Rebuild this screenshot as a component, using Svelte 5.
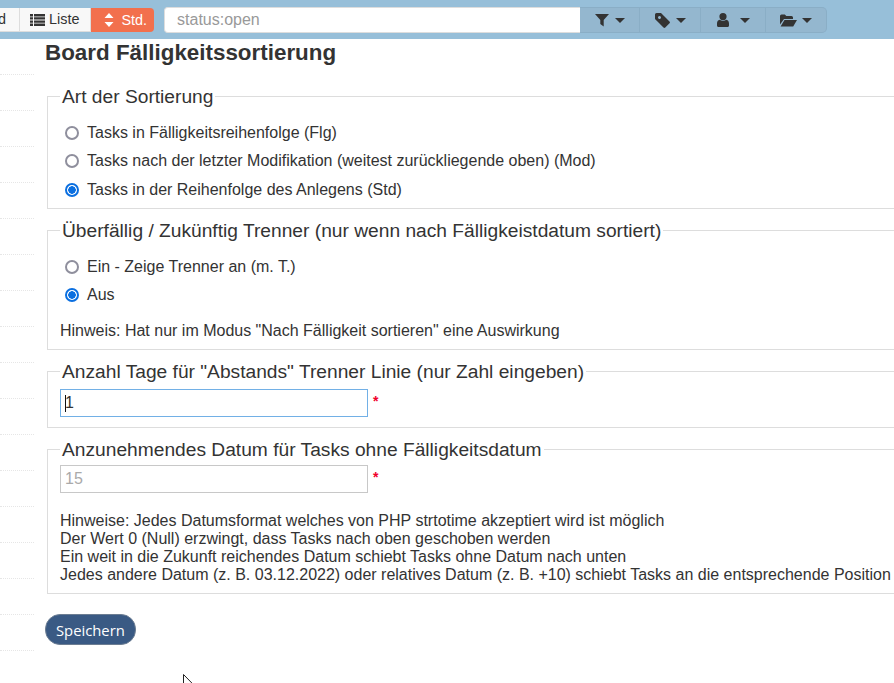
<script>
  const rows = Array.from({ length: 17 });
  const hints = [
    'Hinweise: Jedes Datumsformat welches von PHP strtotime akzeptiert wird ist möglich',
    'Der Wert 0 (Null) erzwingt, dass Tasks nach oben geschoben werden',
    'Ein weit in die Zukunft reichendes Datum schiebt Tasks ohne Datum nach unten',
    'Jedes andere Datum (z. B. 03.12.2022) oder relatives Datum (z. B. +10) schiebt Tasks an die entsprechende Position'
  ];
</script>

<div class="page">
  <header class="topbar">
    <div class="views">
      <span class="btn cut">d</span>
      <span class="btn">
        <svg class="ico" viewBox="0 0 15 12" width="15" height="12"><path d="M0 0h3v2.400H0zM4 0h11v2.400H4zM0 3.200h3v2.400H0zM4 3.200h11v2.400H4zM0 6.400h3v2.400H0zM4 6.400h11v2.400H4zM0 9.600h3V12H0zM4 9.600h11V12H4z" fill="#333"/></svg>
        Liste
      </span>
      <span class="btn active">
        <svg class="ico" viewBox="0 0 10 14" width="10" height="14"><path d="M5 0l4.500 5H.5zM5 14L.5 9h9z" fill="#fff"/></svg>
        Std.
      </span>
    </div>
    <div class="search">status:open</div>
    <div class="filters">
      <span class="drop f1">
        <svg viewBox="0 0 14 14" width="14" height="14"><path d="M0 1h14L8.700 7v6.500L5.300 11V7z" fill="#333"/></svg>
        <i class="caret"></i>
      </span>
      <span class="drop f2">
        <svg viewBox="0 0 15 15" width="15" height="15"><path fill-rule="evenodd" d="M0 1.500A1.500 1.500 0 0 1 1.500 0H6l8.500 8.500a1.300 1.300 0 0 1 0 1.800L10.300 14.500a1.300 1.300 0 0 1-1.800 0L0 6zM3 4.500a1.500 1.500 0 1 0 0-.01z" fill="#333"/></svg>
        <i class="caret"></i>
      </span>
      <span class="drop f3">
        <svg viewBox="0 0 12 14" width="12" height="14"><path d="M6 0a3.400 3.400 0 1 1 0 7.200A3.400 3.400 0 0 1 6 0zM2.600 6.800c1.900 1.500 4.900 1.500 6.800 0 1.700.3 2.600 1.800 2.600 3.800v1.900c0 .9-.6 1.500-1.500 1.500h-9C.6 14 0 13.400 0 12.500v-1.900c0-2 .9-3.500 2.600-3.800z" fill="#333"/></svg>
        <i class="caret"></i>
      </span>
      <span class="drop f4">
        <svg viewBox="0 0 17 13" width="17" height="13"><path d="M0 2a1.500 1.500 0 0 1 1.500-1.500h3.300L6.300 2h5.200A1.500 1.500 0 0 1 13 3.500V5H4L0 10.500zM4.500 6H17l-3.800 6.500H.6z" fill="#333"/></svg>
        <i class="caret"></i>
      </span>
    </div>
  </header>

  <div class="body">
    <aside class="side">
      {#each rows as _}
        <div class="siderow"></div>
      {/each}
    </aside>

    <main class="content">
      <h2>Board Fälligkeitssortierung</h2>

      <fieldset>
        <legend>Art der Sortierung</legend>
        <div class="radios">
          <label><input type="radio" name="sort" />Tasks in Fälligkeitsreihenfolge (Flg)</label>
          <label><input type="radio" name="sort" />Tasks nach der letzter Modifikation (weitest zurückliegende oben) (Mod)</label>
          <label><input type="radio" name="sort" checked />Tasks in der Reihenfolge des Anlegens (Std)</label>
        </div>
      </fieldset>

      <fieldset>
        <legend>Überfällig / Zukünftig Trenner (nur wenn nach Fälligkeistdatum sortiert)</legend>
        <div class="radios">
          <label><input type="radio" name="sep" />Ein - Zeige Trenner an (m. T.)</label>
          <label><input type="radio" name="sep" checked />Aus</label>
        </div>
        <p class="note">Hinweis: Hat nur im Modus "Nach Fälligkeit sortieren" eine Auswirkung</p>
      </fieldset>

      <fieldset class="days">
        <legend>Anzahl Tage für "Abstands" Trenner Linie (nur Zahl eingeben)</legend>
        <div class="field">
          <span class="inputwrap">
            <input class="text focus" type="text" value="1" readonly />
            <span class="textcaret"></span>
          </span>
          <span class="req">*</span>
        </div>
      </fieldset>

      <fieldset class="date">
        <legend>Anzunehmendes Datum für Tasks ohne Fälligkeitsdatum</legend>
        <div class="field">
          <input class="text" type="text" placeholder="15" />
          <span class="req">*</span>
        </div>
        <p class="hints">
          {#each hints as h}
            <span>{h}</span>
          {/each}
        </p>
      </fieldset>

      <button class="save" type="button">Speichern</button>
    </main>
  </div>

  <svg class="pointer" viewBox="0 0 12 18" width="12" height="18"><path d="M.5.500v15.500l3.600-3.400 2.400 5 2.300-1-2.300-4.900h5z" fill="#fff" stroke="#222" stroke-width="1"/></svg>
</div>

<style>
  :global(body) {
    margin: 0;
    overflow: hidden;
    background: #fff;
  }

  .page {
    position: relative;
    width: 894px;
    height: 683px;
    overflow: hidden;
    font-family: "Liberation Sans", Arial, sans-serif;
    font-size: 16px;
    color: #333;
  }

  .topbar {
    display: flex;
    align-items: flex-start;
    box-sizing: border-box;
    height: 39px;
    padding-top: 7px;
    background: #97bfd9;
  }

  .views {
    display: flex;
    box-sizing: border-box;
    height: 25px;
    margin-left: -18px;
    padding-top: 1px;
  }

  .btn {
    display: flex;
    align-items: center;
    gap: 4px;
    padding: 0 11px 0 10px;
    background: #f8f8f8;
    border-right: 1px solid #ddd;
    border-bottom: 1px solid #ddd;
    color: #333;
    font-size: 14.400px;
    line-height: 1;
  }

  .btn.cut {
    padding: 0 13px 0 16px;
  }

  .btn.active {
    background: #f2704d;
    color: #fff;
    border: 0;
    border-radius: 0 4px 4px 0;
    gap: 7px;
    padding: 0 7px 0 13px;
  }

  .search {
    box-sizing: border-box;
    width: 416px;
    height: 26px;
    margin-left: 10px;
    padding-left: 12px;
    background: #fff;
    border: 1px solid #ddd;
    border-right: 0;
    border-radius: 4px 0 0 4px;
    color: #999;
    font-size: 16px;
    line-height: 24px;
  }

  .filters {
    display: flex;
    box-sizing: border-box;
    height: 26px;
    border: 1px solid #8aaec6;
    border-left: 0;
    border-radius: 0 5px 5px 0;
    background: #94b7cf;
  }

  .drop {
    display: flex;
    align-items: center;
    justify-content: center;
    gap: 6px;
    border-right: 1px solid #8aaec6;
  }

  .drop:last-child {
    border-right: 0;
  }

  .f1 { width: 59px; }
  .f2 { width: 60px; }
  .f3 { width: 64px; gap: 11px; }
  .f4 { width: 60px; gap: 5px; }

  .caret {
    width: 0;
    height: 0;
    border-left: 5px solid transparent;
    border-right: 5px solid transparent;
    border-top: 5px solid #333;
  }

  .body {
    display: flex;
  }

  .side {
    flex: none;
    width: 34px;
  }

  .siderow {
    height: 35px;
    border-bottom: 1px dotted #e6e6e6;
  }

  .content {
    flex: none;
    width: 1000px;
    padding-left: 11px;
  }

  h2 {
    margin: 2px 0 19px;
    font-size: 22.400px;
    line-height: 24px;
    font-weight: 700;
    color: #333;
  }

  fieldset {
    margin: 0 0 9px 2px;
    padding: 6px 12px 4px;
    border: 1px solid #ddd;
    min-width: 0;
  }

  fieldset.days {
    padding-top: 6px;
    padding-bottom: 10px;
  }

  fieldset.date {
    padding-top: 4px;
    padding-bottom: 9px;
  }

  legend {
    padding: 2px 2px 0;
    font-size: 19.200px;
    line-height: 22px;
    color: #333;
  }

  .radios {
    margin-top: 4.500px;
  }

  label {
    display: flex;
    align-items: center;
    height: 28.500px;
    margin-left: 5px;
  }

  label input {
    appearance: none;
    box-sizing: border-box;
    flex: none;
    margin: 0 8px 0 0;
    width: 14px;
    height: 14px;
    border: 2px solid #8f8f9d;
    border-radius: 50%;
    background: #fff;
  }

  label input:checked {
    border-color: #0b6fe0;
    background: radial-gradient(circle, #0b6fe0 0 3.500px, #fff 4px);
  }

  .note {
    margin: 12px 0 5.500px;
    line-height: 18px;
  }

  .field {
    display: flex;
    align-items: center;
    gap: 5px;
  }

  .inputwrap {
    position: relative;
    display: flex;
  }

  .text {
    width: 308px;
    height: 28px;
    box-sizing: border-box;
    padding: 0 4px;
    border: 1px solid #c8c8c8;
    outline: 0;
    font-family: inherit;
    font-size: 16px;
    color: #333;
  }

  .text::placeholder {
    color: #aaa;
    opacity: 1;
  }

  .text.focus {
    border-color: #72b0e6;
  }

  .textcaret {
    position: absolute;
    left: 5px;
    top: 6px;
    width: 1px;
    height: 17px;
    background: #111;
  }

  .req {
    color: #f0002a;
    font-size: 14px;
    font-weight: 700;
    margin-top: -5px;
  }

  .hints {
    margin: 19px 0 0;
    white-space: nowrap;
  }

  .hints span {
    display: block;
    line-height: 18px;
  }

  .save {
    display: block;
    margin-top: 20px;
    height: 31px;
    padding: 0 10px;
    border: 1px solid #6c7d92;
    border-radius: 15px;
    background: #3a5a84;
    color: #fff;
    font-family: "Open Sans", sans-serif;
    font-size: 14.800px;
  }

  .pointer {
    position: absolute;
    left: 183px;
    top: 674px;
  }
</style>
